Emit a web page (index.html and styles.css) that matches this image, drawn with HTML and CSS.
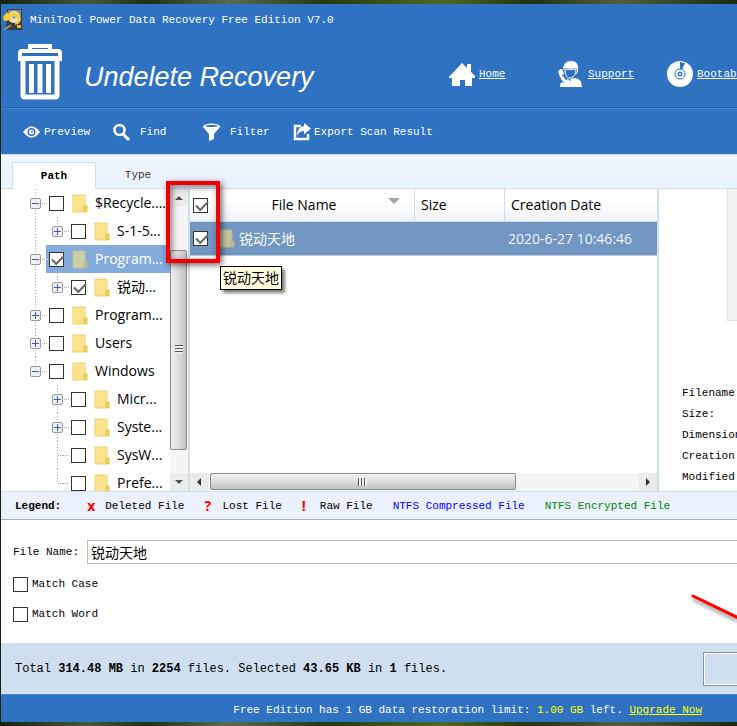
FILE: index.html
```html
<!DOCTYPE html>
<html lang="en">
<head>
  <meta charset="UTF-8">
  <meta name="viewport" content="width=device-width, initial-scale=1.0">
  <title>MiniTool Power Data Recovery</title>
  <link rel="stylesheet" href="styles.css">
</head>
<body>
  <svg class="symbols" width="0" height="0" aria-hidden="true">
    <symbol id="folder" viewBox="0 0 16 19">
      <path d="M1 1h12v11h2v6H1z" fill="#fde48c" stroke="#f0cf68"/>
      <path d="M12 12.500h2.500v5H12z" fill="#fbd969" stroke="#e9bd45"/>
    </symbol>
  </svg>

  <div class="window">
    <header class="titlebar">
      <svg class="app-icon" viewBox="0 0 20 22">
        <path d="M4 0h15v21H3z" fill="#3a3d3c"/>
        <path d="M5 1h13v8H5z" fill="#8c8f8b"/>
        <circle cx="11" cy="8" r="6" fill="#e9e4d2"/>
        <circle cx="11" cy="8" r="2" fill="#aaa593"/>
        <path d="M0 8l4-5 2 3c4-4 9-3 11 2l-3 2c-2-4-5-4-7-2l2 3-8 1z" fill="#f4cf2f"/>
        <path d="M17 9q0 5-5 6" fill="none" stroke="#f4cf2f" stroke-width="2"/>
        <path d="M1 21l7-5" stroke="#8f938f" stroke-width="2"/>
        <path d="M14 16h4v3h-4z" fill="#eeb52a"/>
      </svg>
      <span>MiniTool Power Data Recovery Free Edition V7.0</span>
    </header>

    <div class="banner">
      <svg class="bin" viewBox="0 0 46 56" fill="none" stroke="#fff">
        <path d="M13 7V2h20v5" stroke-width="4"/>
        <path d="M3 15V9q0-2 2-2h36q2 0 2 2v6z" stroke-width="4"/>
        <path d="M3 14h40" stroke-width="4"/>
        <path d="M6 16v35q0 2 2 2h30q2 0 2-2V16" stroke-width="5"/>
        <path d="M14.500 20v29M23 20v29M31.500 20v29" stroke-width="5"/>
      </svg>
      <h1>Undelete Recovery</h1>
      <nav class="links">
        <a href="#">
          <svg viewBox="0 0 26 26" fill="#fff"><path d="M0 16L13 2l5 5V3h4v8l5 5-1 1h-3v8h-7v-6h-5v6H3v-8H0z"/></svg>
          <span>Home</span>
        </a>
        <a href="#">
          <svg viewBox="0 0 26 26" fill="#fff">
            <path d="M5 9q0-9 8-9t7 9l-2-2q-5 1-11 0z"/>
            <path d="M7 8q6 1 11 0 0 8-5.500 9T7 8z" fill="none" stroke="#fff"/>
            <path d="M19 7q2 3-1 6"  fill="none" stroke="#fff"/>
            <path d="M0 10l3-2 2 1 1 4-2 1 4 5 2-1 2 2q-1 3-4 3Q2 19 0 10z"/>
            <path d="M2 26q0-4 2-5 5 3 9-2l-1-1 5-1q7 1 7 9z"/>
          </svg>
          <span>Support</span>
        </a>
        <a href="#">
          <svg viewBox="0 0 26 26">
            <circle cx="13" cy="13" r="13" fill="#fff"/>
            <path d="M13 1l5 1-3 7h-2z" fill="#2e72c1"/>
            <circle cx="13" cy="13" r="5" fill="#fff" stroke="#2e72c1"/>
            <circle cx="13" cy="13" r="2.500" fill="#2e72c1"/>
            <circle cx="13" cy="13" r="1" fill="#fff"/>
          </svg>
          <span>Bootable</span>
        </a>
      </nav>
    </div>

    <div class="toolbar">
      <button type="button">
        <svg viewBox="0 0 18 18"><path d="M0 9q9-11 17 0-8 11-17 0z" fill="#fff"/><circle cx="8.500" cy="9" r="4" fill="#2e72c1"/><circle cx="8.500" cy="9" r="2.500" fill="#fff"/><circle cx="9" cy="8.500" r="1" fill="#2e72c1"/></svg>
        Preview
      </button>
      <button type="button" class="spaced">
        <svg viewBox="0 0 18 18" fill="none" stroke="#fff"><circle cx="6.500" cy="7" r="5" stroke-width="2.500"/><path d="M10 11l6 6" stroke-width="3"/></svg>
        Find
      </button>
      <button type="button" class="spaced">
        <svg viewBox="0 0 18 18"><ellipse cx="8.500" cy="3.500" rx="8.500" ry="3" fill="#fff"/><path d="M0 4q8 4 17 0l-6 7v5l-5 2v-7z" fill="#fff"/><ellipse cx="8.500" cy="3" rx="6" ry="1" fill="#2e72c1"/></svg>
        Filter
      </button>
      <button type="button">
        <svg viewBox="0 0 18 18"><path d="M8 3H2v13h13v-5" fill="none" stroke="#fff" stroke-width="2.500"/><path d="M11 0l7 5.500-7 6V8q-5 0-7 5 0-9 7-10z" fill="#fff"/></svg>
        Export Scan Result
      </button>
    </div>

    <div class="tabs">
      <button type="button" class="tab active">Path</button>
      <button type="button" class="tab">Type</button>
    </div>

    <main class="browser">
      <div class="tree-pane">
        <ul class="tree">
          <li>
            <label class="node"><i class="expander open"></i><input type="checkbox"><svg class="folder"><use href="#folder"/></svg>$Recycle....</label>
            <ul>
              <li><label class="node"><i class="expander"></i><input type="checkbox"><svg class="folder"><use href="#folder"/></svg>S-1-5...</label></li>
            </ul>
          </li>
          <li>
            <label class="node selected"><i class="expander open"></i><input type="checkbox" checked><svg class="folder"><use href="#folder"/></svg>Program...</label>
            <ul>
              <li><label class="node"><i class="expander"></i><input type="checkbox" checked><svg class="folder"><use href="#folder"/></svg>锐动...</label></li>
            </ul>
          </li>
          <li><label class="node"><i class="expander"></i><input type="checkbox"><svg class="folder"><use href="#folder"/></svg>Program...</label></li>
          <li><label class="node"><i class="expander"></i><input type="checkbox"><svg class="folder"><use href="#folder"/></svg>Users</label></li>
          <li class="last">
            <label class="node"><i class="expander open"></i><input type="checkbox"><svg class="folder"><use href="#folder"/></svg>Windows</label>
            <ul class="joined">
              <li><label class="node"><i class="expander"></i><input type="checkbox"><svg class="folder"><use href="#folder"/></svg>Micr...</label></li>
              <li><label class="node"><i class="expander"></i><input type="checkbox"><svg class="folder"><use href="#folder"/></svg>Syste...</label></li>
              <li><label class="node"><i class="expander none"></i><input type="checkbox"><svg class="folder"><use href="#folder"/></svg>SysW...</label></li>
              <li class="last"><label class="node"><i class="expander none"></i><input type="checkbox"><svg class="folder"><use href="#folder"/></svg>Prefe...</label></li>
            </ul>
          </li>
        </ul>
        <div class="scroll vertical">
          <svg viewBox="0 0 18 18"><path d="M5 11h8L9 7z" fill="#555"/></svg>
          <div class="track before"></div>
          <div class="thumb"><i></i></div>
          <div class="track after"></div>
          <svg viewBox="0 0 18 18"><path d="M5 7h8l-4 4z" fill="#555"/></svg>
        </div>
      </div>

      <div class="list-pane">
        <table class="files">
          <thead>
            <tr>
              <th class="col-check"><input type="checkbox" aria-label="Select all" checked></th>
              <th class="col-name">File Name<i class="sort"></i></th>
              <th class="col-size">Size</th>
              <th>Creation Date</th>
            </tr>
          </thead>
          <tbody>
            <tr>
              <td><input type="checkbox" aria-label="Select file" checked></td>
              <td>
                <div class="file"><svg class="folder"><use href="#folder"/></svg>锐动天地</div>
                <div class="tooltip">锐动天地</div>
              </td>
              <td></td>
              <td class="date">2020-6-27 10:46:46</td>
            </tr>
          </tbody>
        </table>
        <div class="scroll horizontal">
          <svg viewBox="0 0 18 18"><path d="M11 5v8L7 9z" fill="#333"/></svg>
          <div class="thumb"><i></i></div>
          <div class="track"></div>
          <svg viewBox="0 0 18 18"><path d="M7 5v8l4-4z" fill="#333"/></svg>
        </div>
      </div>

      <aside class="info-pane">
        <div class="picture"></div>
        <ul class="details">
          <li>Filename:</li>
          <li>Size:</li>
          <li>Dimensions:</li>
          <li>Creation Date:</li>
          <li>Modified Date:</li>
        </ul>
      </aside>

      <div class="marker"></div>
    </main>

    <div class="legend">
      <b>Legend:</b>
      <span><i class="mark">x</i>Deleted File</span>
      <span><i class="mark">?</i>Lost File</span>
      <span><i class="mark">!</i>Raw File</span>
      <span class="compressed">NTFS Compressed File</span>
      <span class="encrypted">NTFS Encrypted File</span>
    </div>

    <form class="search">
      <div class="field">
        <label for="filename">File Name:</label>
        <input type="text" id="filename" value="锐动天地">
      </div>
      <label class="option"><input type="checkbox">Match Case</label>
      <label class="option"><input type="checkbox">Match Word</label>
      <svg class="arrow" viewBox="0 0 50 40"><path d="M6 8l60 29" stroke="#f00" stroke-width="3" stroke-linecap="round"/></svg>
    </form>

    <div class="status">
      <p>Total <b>314.48 MB</b> in <b>2254</b> files. Selected <b>43.65 KB</b> in <b>1</b> files.</p>
      <button type="button" class="save" aria-label="Save Files"></button>
    </div>

    <footer class="notice">
      <p>Free Edition has 1 GB data restoration limit: <em>1.00 GB</em> left. <a href="#">Upgrade Now</a></p>
    </footer>
  </div>
</body>
</html>
```

FILE: styles.css
```css
* {
  box-sizing: border-box;
}

body {
  margin: 0;
  height: 100vh;
  padding: 4px 0 4px 1px;
  overflow: hidden;
  font: 11px/16px "Liberation Mono", "Noto Sans CJK SC", monospace;
  color: #000;
  background: linear-gradient(90deg, #14240f, #46583a 12%, #1d3213 20%, #5a6c50 31%, #24380f 44%, #4d6b22 60%, #23320f 72%, #51603a 84%, #1a2b0c);
}

ul {
  list-style: none;
  margin: 0;
  padding: 0;
}

p {
  margin: 0;
}

button {
  font: inherit;
  color: inherit;
  padding: 0;
  border: 0;
  background: none;
}

input[type="checkbox"] {
  appearance: none;
  flex: none;
  display: block;
  width: 15px;
  height: 15px;
  margin: 0;
  border: 1px solid #333;
  background: #fff;
}

input[type="checkbox"]:checked::after {
  content: "";
  display: block;
  width: 10px;
  height: 5px;
  margin: 2px 0 0 2px;
  border: solid #666;
  border-width: 0 0 2px 2px;
  transform: rotate(-45deg);
}

.symbols {
  position: absolute;
}

.window {
  height: 100%;
  display: flex;
  flex-direction: column;
  background: #2e72c1;
}

/* header */
.titlebar {
  display: flex;
  align-items: center;
  gap: 7px;
  height: 32px;
  padding-left: 2px;
  color: #fff;
}

.app-icon {
  width: 20px;
  height: 22px;
}

.banner {
  display: flex;
  align-items: center;
  height: 72px;
  padding-left: 16px;
  border-bottom: 1px solid #2262ab;
}

.bin {
  flex: none;
  width: 46px;
  height: 56px;
}

h1 {
  margin: 10px 0 0 21px;
  font: italic 27px/32px "Liberation Sans", Arial, sans-serif;
  color: #fff;
  white-space: nowrap;
}

.links {
  display: flex;
  flex: 0 0 288px;
  min-width: 0;
  margin-left: auto;
  padding-top: 4px;
}

.links a {
  display: flex;
  flex: 0 0 109px;
  align-items: center;
  gap: 4px;
  color: #fff;
  white-space: nowrap;
}

.links svg {
  flex: none;
  width: 26px;
  height: 26px;
}

.toolbar {
  display: flex;
  height: 46px;
  padding-left: 22px;
  border-top: 1px solid #4787ca;
  color: #fff;
}

.toolbar button {
  display: flex;
  align-items: center;
  gap: 3px;
  min-width: 90px;
  white-space: nowrap;
}

.toolbar .spaced {
  gap: 9px;
}

.toolbar svg {
  width: 18px;
  height: 18px;
}

/* tabs */
.tabs {
  display: flex;
  align-items: flex-end;
  height: 35px;
  padding-left: 11px;
  border-bottom: 1px solid #cbdfec;
  border-top: 1px solid #cbdfec;
  background: linear-gradient(#f0f6ff, #eaf2fe);
}

.tab {
  width: 84px;
  height: 26px;
  color: #333;
}

.tab.active {
  margin-bottom: -1px;
  height: 27px;
  color: #000;
  font-weight: bold;
  background: #fff;
  border: 1px solid #cbdfec;
  border-bottom: 0;
}

/* path tree, file list and preview */
.browser {
  position: relative;
  display: flex;
  flex: 1;
  min-height: 0;
  background: #fff;
  font-family: "Open Sans", "Noto Sans CJK SC", sans-serif;
  font-size: 14px;
}

.tree-pane {
  display: flex;
  flex: 0 0 189px;
  overflow: hidden;
  border-right: 2px solid #cddfeb;
}

.tree {
  flex: 1;
}

.tree > li {
  background: repeating-linear-gradient(#aaa 0 1px, #fff 1px 3px) 34px 0 / 1px 100% no-repeat;
}

.tree > li.last {
  background-size: 1px 14px;
}

.tree ul {
  margin-left: 22px;
}

.tree ul li {
  background: repeating-linear-gradient(#aaa 0 1px, #fff 1px 3px) 34px 0 / 1px 14px no-repeat;
}

.tree .joined li {
  background-size: 1px 100%;
}

.tree .joined li.last {
  background-size: 1px 14px;
}

.node {
  display: flex;
  align-items: center;
  height: 28px;
  padding-left: 29px;
  white-space: nowrap;
}

.node.selected {
  color: #fff;
  background: linear-gradient(#84abdc, #84abdc) 45px 0 no-repeat;
}

.expander {
  flex: none;
  width: 11px;
  height: 11px;
  margin-right: 8px;
  border: 1px solid #999;
  border-radius: 2px;
  background:
    linear-gradient(#3d5ca8, #3d5ca8) center / 7px 1px no-repeat,
    linear-gradient(#3d5ca8, #3d5ca8) center / 1px 7px no-repeat,
    #f0f0f0;
}

.expander.open {
  background: linear-gradient(#3d5ca8, #3d5ca8) center / 7px 1px no-repeat, #f0f0f0;
}

/* dotted connector towards the tick box */
.expander::after {
  content: "";
  display: block;
  width: 6px;
  height: 1px;
  margin: 4px 0 0 11px;
  background: repeating-linear-gradient(90deg, #aaa 0 1px, #fff 1px 2px);
}

.expander.none {
  border: 0;
  background: repeating-linear-gradient(90deg, #aaa 0 1px, #fff 1px 2px) 6px 5px / 5px 1px no-repeat;
}

.expander.none::after {
  margin-top: 5px;
}

.folder {
  flex: none;
  width: 16px;
  height: 19px;
  margin: 0 7px 0 8px;
}

.selected .folder,
.file .folder {
  opacity: 0.6;
}

.scroll {
  display: flex;
  flex: none;
  background: #f2f2f2;
}

.scroll svg {
  flex: none;
  width: 18px;
  height: 18px;
  background: #ebebeb;
}

.thumb {
  display: flex;
  align-items: center;
  justify-content: center;
  border: 1px solid #8c8c8c;
  border-radius: 2px;
}

.track {
  background: #f5f5f5;
}

.vertical {
  flex-direction: column;
  width: 18px;
}

.vertical .before {
  flex: 43;
}

.vertical .thumb {
  flex: 200;
  width: 17px;
  background: linear-gradient(90deg, #eee, #dcdcdc 50%, #c2c2c6);
}

.vertical .after {
  flex: 23;
}

.vertical .thumb i {
  width: 8px;
  height: 9px;
  background: repeating-linear-gradient(#555 0 1px, #eee 1px 3px);
}

.horizontal {
  margin-top: auto;
  height: 18px;
}

.horizontal .thumb {
  flex: 305;
  height: 17px;
  margin-left: 2px;
  background: linear-gradient(#f2f2f2, #dcdcdc 50%, #c2c2c6);
}

.horizontal .track {
  flex: 124;
}

.horizontal .thumb i {
  width: 9px;
  height: 8px;
  background: repeating-linear-gradient(90deg, #555 0 1px, #eee 1px 3px);
}

.list-pane {
  display: flex;
  flex: 1;
  flex-direction: column;
  min-width: 0;
}

.files {
  width: 100%;
  table-layout: fixed;
  border-collapse: separate;
  border-spacing: 0;
}

.files th {
  position: relative;
  height: 33px;
  padding: 0 6px;
  border-right: 1px solid #cbdfec;
  border-bottom: 1px solid #cbdfec;
  background: linear-gradient(#fff 40%, #eff1f3);
  font-weight: normal;
  text-align: left;
}

.files .col-check {
  width: 26px;
  padding: 0 3px;
  border-right: 0;
}

.files .col-name {
  width: 199px;
  padding-right: 28px;
  text-align: center;
}

.files .col-size {
  width: 90px;
}

.files th:last-child {
  border-right: 0;
}

.sort {
  position: absolute;
  top: 9px;
  right: 14px;
  border: solid transparent;
  border-width: 6px 6px 0;
  border-top-color: #a3a3a3;
}

.files td {
  position: relative;
  height: 34px;
  padding: 0 3px;
  color: #fff;
  background: #7296c1;
  border-bottom: 1px solid #b5cade;
}

.files .date {
  color: #edf3fa;
}

.file {
  display: flex;
  align-items: center;
}

.file .folder {
  margin: 0 4px 0 0;
}

.tooltip {
  position: absolute;
  top: 44px;
  left: 4px;
  padding: 3px 2px;
  border: 1px solid #000;
  background: #ffffe1;
  box-shadow: 3px 3px 3px rgba(0, 0, 0, 0.5);
  color: #000;
}

.info-pane {
  display: flex;
  flex: 0 0 80px;
  flex-direction: column;
  justify-content: space-between;
  overflow: hidden;
  border-left: 2px solid #cddfeb;
}

.picture {
  width: 200px;
  height: 132px;
  margin-left: 68px;
  border: 1px solid #d3e1f0;
  border-top: 0;
  background: #f1f1f1;
}

.details {
  padding: 0 0 3px 23px;
  font: 11px/21px "Liberation Mono", monospace;
  white-space: nowrap;
}

/* red frame round both tick boxes */
.marker {
  position: absolute;
  top: -8px;
  left: 165px;
  width: 54px;
  height: 82px;
  border: 4px solid #f40000;
  box-shadow: 2px 2px 6px rgba(0, 0, 0, 0.6), inset 2px 2px 6px rgba(0, 0, 0, 0.5);
  pointer-events: none;
}

/* legend */
.legend {
  display: flex;
  align-items: center;
  gap: 20px;
  height: 29px;
  padding-left: 14px;
  border-top: 1px solid #cbdfec;
  border-bottom: 1px solid #a5abb5;
  background: #eaf0fc;
  white-space: nowrap;
}

.legend b {
  margin-right: 6px;
}

.legend span {
  display: flex;
  align-items: center;
}

.mark {
  width: 18px;
  color: #f00;
  font: bold 14px/16px "Open Sans", sans-serif;
}

.compressed {
  color: #00f;
}

.encrypted {
  color: #008000;
}

/* search */
.search {
  position: relative;
  display: flex;
  flex-direction: column;
  height: 123px;
  padding: 20px 0 0 12px;
  overflow: hidden;
  background: #fff;
}

.field {
  display: flex;
  align-items: center;
  gap: 8px;
  margin-bottom: 5px;
}

.field input {
  flex: 1;
  height: 24px;
  padding: 0 3px;
  border: 1px solid #b9b9c1;
  border-right: 0;
  font: 14px "Noto Sans CJK SC", sans-serif;
}

.option {
  display: flex;
  align-items: center;
  align-self: flex-start;
  gap: 4px;
  height: 30px;
}

.arrow {
  position: absolute;
  right: 0;
  top: 68px;
  width: 50px;
  height: 40px;
  filter: drop-shadow(1px 3px 2px rgba(0, 0, 0, 0.5));
}

/* status and notice */
.status {
  display: flex;
  align-items: center;
  justify-content: space-between;
  height: 51px;
  padding-left: 14px;
  background: #d0dff0;
  font-size: 12px;
  white-space: nowrap;
}

.save {
  width: 34px;
  height: 34px;
  border: 1px solid #8695a8;
  border-right: 0;
  box-shadow: inset 1px 1px #fff, inset 0 -1px #fff;
}

.notice {
  height: 28px;
  padding: 7px 35px 0 0;
  border-top: 1px solid #4787ca;
  color: #fff;
  text-align: right;
}

.notice em,
.notice a {
  color: #ff0;
  font-style: normal;
}
```
